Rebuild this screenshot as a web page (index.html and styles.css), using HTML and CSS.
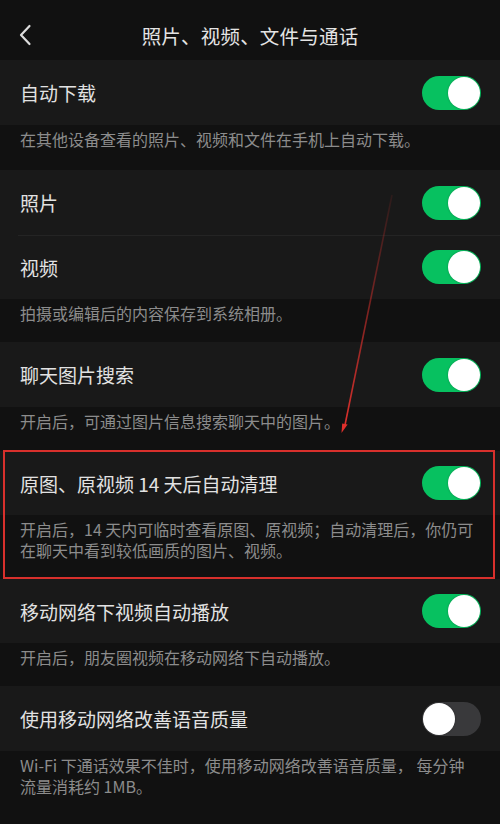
FILE: index.html
```
<!DOCTYPE html>
<html lang="zh-CN">
<head>
<meta charset="utf-8">
<link rel="stylesheet" href="styles.css">
</head>
<body>
<div class="page">
  <header class="nav">
    <svg class="back" width="14" height="22" viewBox="0 0 14 22"><path d="M11.5 2 L3 11 L11.5 20" fill="none" stroke="#dcdcdc" stroke-width="2.2" stroke-linecap="round" stroke-linejoin="round"/></svg>
    <div class="title">照片、视频、文件与通话</div>
  </header>

  <section class="group">
    <div class="cell"><span class="label">自动下载</span><span class="switch on"><i></i></span></div>
    <div class="desc tall">在其他设备查看的照片、视频和文件在手机上自动下载。</div>
  </section>

  <section class="group">
    <div class="cell"><span class="label">照片</span><span class="switch on"><i></i></span></div>
    <div class="cell sep"><span class="label">视频</span><span class="switch on"><i></i></span></div>
    <div class="desc">拍摄或编辑后的内容保存到系统相册。</div>
  </section>

  <section class="group">
    <div class="cell"><span class="label">聊天图片搜索</span><span class="switch on"><i></i></span></div>
    <div class="desc mid">开启后，可通过图片信息搜索聊天中的图片。</div>
  </section>

  <section class="group marked">
    <div class="cell short"><span class="label">原图、原视频 14 天后自动清理</span><span class="switch on"><i></i></span></div>
    <div class="desc"><div class="line">开启后，14 天内可临时查看原图、原视频；自动清理后，你仍可</div><div class="line">在聊天中看到较低画质的图片、视频。</div></div>
  </section>

  <section class="group">
    <div class="cell short"><span class="label">移动网络下视频自动播放</span><span class="switch on"><i></i></span></div>
    <div class="desc">开启后，朋友圈视频在移动网络下自动播放。</div>
  </section>

  <section class="group">
    <div class="cell"><span class="label">使用移动网络改善语音质量</span><span class="switch off"><i></i></span></div>
    <div class="desc"><div class="line">Wi-Fi 下通话效果不佳时，使用移动网络改善语音质量， 每分钟</div><div class="line">流量消耗约 1MB。</div></div>
  </section>

  <svg class="arrow" width="500" height="824" viewBox="0 0 500 824">
    <defs>
      <linearGradient id="fade" x1="392" y1="195" x2="343" y2="432" gradientUnits="userSpaceOnUse">
        <stop offset="0" stop-color="#d8302c" stop-opacity="0.1"/>
        <stop offset="0.5" stop-color="#d8302c" stop-opacity="0.55"/>
        <stop offset="1" stop-color="#e0302c" stop-opacity="1"/>
      </linearGradient>
    </defs>
    <line x1="392" y1="195" x2="345" y2="425" stroke="url(#fade)" stroke-width="1.6"/>
    <path d="M341.5 433 L342.2 423.5 L347.6 424.6 Z" fill="#e0302c"/>
  </svg>
</div>
</body>
</html>
```

FILE: styles.css
```
* { box-sizing: border-box; }
html, body { margin: 0; padding: 0; }
body {
  background: #111111;
  font-family: "Noto Sans CJK SC", "Noto Sans", sans-serif;
  width: 500px;
  height: 824px;
  overflow: hidden;
}
.page {
  position: relative;
  width: 500px;
  height: 824px;
  background: #111111;
}
.nav {
  height: 60px;
  display: flex;
  align-items: center;
  justify-content: center;
  position: relative;
  background: #111111;
}
.back {
  position: absolute;
  left: 18px;
  top: 24px;
}
.title {
  color: #e4e4e4;
  font-size: 19.5px;
  letter-spacing: 0.2px;
  padding-top: 10px;
}
.group { position: relative; }
.cell {
  height: 65px;
  background: #191919;
  display: flex;
  align-items: center;
  justify-content: space-between;
  padding: 0 19px 0 20px;
  position: relative;
}
.cell.sep, .cell.short { height: 64px; }
.cell.sep::before {
  content: "";
  position: absolute;
  left: 18px;
  right: 0;
  top: 0;
  height: 1px;
  background: #242424;
}
.label {
  color: #e2e2e2;
  font-size: 19px;
}
.desc {
  color: #8c8c8c;
  font-size: 16px;
  line-height: 21px;
  padding: 4px 10px 18px 20px;
  background: #111111;
  white-space: nowrap;
}
.desc.tall { padding-bottom: 20px; }
.desc.mid { padding-bottom: 19px; }
.line { height: 21px; }
.switch {
  width: 59px;
  height: 34px;
  border-radius: 17px;
  position: relative;
  flex: none;
}
.switch.on { background: #07c160; }
.switch.off { background: #39393b; }
.switch i {
  position: absolute;
  top: 1px;
  width: 32px;
  height: 32px;
  border-radius: 50%;
  background: #ffffff;
  box-shadow: 0 0 2px rgba(0,0,0,0.3);
}
.switch.on i { right: 1px; }
.switch.off i { left: 1px; }
.marked::after {
  content: "";
  position: absolute;
  left: 3px;
  right: 5px;
  top: -1px;
  bottom: 0;
  border: 2.5px solid #d8302c;
  pointer-events: none;
}
.arrow {
  position: absolute;
  left: 0;
  top: 0;
  pointer-events: none;
}
```
